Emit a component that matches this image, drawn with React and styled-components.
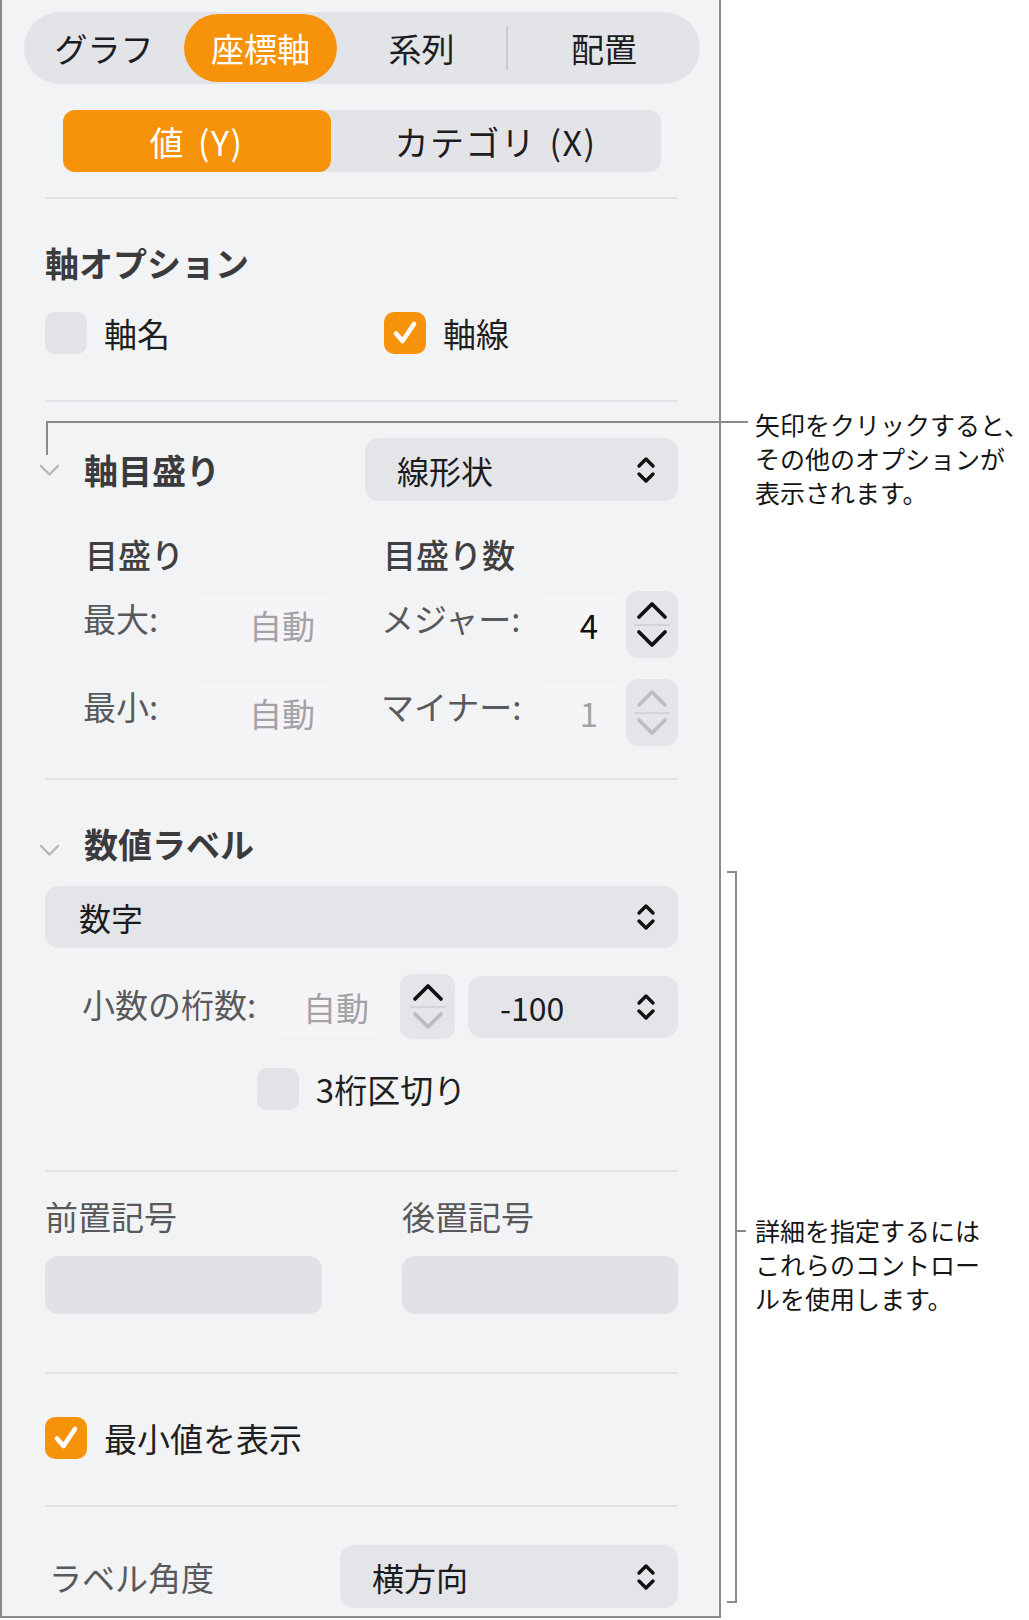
import React from "react";
import styled, { createGlobalStyle } from "styled-components";

const ORANGE = "#f7930b";
const CONTROL = "#e4e5e8";
const LINE = "#8a8a8a";

const Global = createGlobalStyle`
  html, body { margin: 0; padding: 0; background: #ffffff; }
  body {
    font-family: "Noto Sans CJK JP", "Noto Sans", sans-serif;
    -webkit-font-smoothing: antialiased;
  }
  * { box-sizing: border-box; }
`;

const Page = styled.div`
  position: relative;
  width: 1029px;
  height: 1620px;
  overflow: hidden;
`;

const Panel = styled.div`
  width: 721px;
  background: #f2f3f5;
  border-left: 2px solid ${LINE};
  border-right: 2px solid ${LINE};
  border-bottom: 2px solid ${LINE};
  padding: 12px 0 8px;
  display: flex;
  flex-direction: column;
`;

const TabBar = styled.div`
  margin: 0 19px 0 22px;
  height: 72px;
  border-radius: 36px;
  background: #e3e4e7;
  padding: 2px 0;
  display: flex;
  align-items: center;
`;

const Tab = styled.div`
  flex: none;
  width: ${(p) => p.$w}px;
  height: 100%;
  border-radius: 35px;
  display: flex;
  align-items: center;
  justify-content: center;
  font-size: 33px;
  color: ${(p) => (p.$active ? "#ffffff" : "#1d1d1f")};
  background: ${(p) => (p.$active ? ORANGE : "transparent")};
`;

const TabDivider = styled.div`
  flex: none;
  width: 2px;
  height: 43px;
  background: #cacacd;
`;

const Content = styled.div`
  padding: 0 41px 0 43px;
  display: flex;
  flex-direction: column;
`;

const Segment = styled.div`
  margin: 26px auto 0;
  width: 598px;
  height: 62px;
  border-radius: 12px;
  background: #e3e4e7;
  display: flex;
`;

const SegItem = styled.div`
  flex: none;
  width: ${(p) => p.$w}px;
  height: 100%;
  border-radius: 12px;
  display: flex;
  align-items: center;
  justify-content: center;
  font-size: 34px;
  letter-spacing: 1.5px;
  word-spacing: 4px;
  color: ${(p) => (p.$active ? "#ffffff" : "#1d1d1f")};
  background: ${(p) => (p.$active ? ORANGE : "transparent")};
`;

const Divider = styled.div`
  height: 2px;
  background: #e1e2e5;
  margin-top: ${(p) => p.$mt}px;
`;

const Heading = styled.div`
  margin-top: ${(p) => p.$mt}px;
  height: 40px;
  line-height: 40px;
  font-size: 34px;
  font-weight: 600;
  color: #3b3b3d;
  white-space: nowrap;
`;

const CheckRow = styled.div`
  margin-top: ${(p) => p.$mt}px;
  height: 42px;
  display: grid;
  grid-template-columns: ${(p) => p.$cols};
  justify-content: ${(p) => (p.$center ? "center" : "start")};
  align-items: center;
`;

const CheckItem = styled.label`
  display: flex;
  align-items: center;
  gap: 17px;
  font-size: 33px;
  color: #1f1f21;
  white-space: nowrap;
`;

const Box = styled.span`
  flex: none;
  width: 42px;
  height: 42px;
  border-radius: 10px;
  background: ${(p) => (p.$checked ? ORANGE : "#e2e3e6")};
  display: flex;
  align-items: center;
  justify-content: center;
`;

const DisclosureRow = styled.div`
  margin-top: ${(p) => p.$mt}px;
  height: ${(p) => p.$h}px;
  display: flex;
  align-items: center;
`;

const Disclosure = styled.span`
  flex: none;
  width: 21px;
  margin: ${(p) => p.$dy}px 24px 0 -6px;
  display: flex;
`;

const SectionTitle = styled.div`
  flex: 1;
  font-size: 34px;
  font-weight: 600;
  color: #3b3b3d;
  line-height: 40px;
  white-space: nowrap;
`;

const Popup = styled.div`
  flex: none;
  width: ${(p) => (p.$w ? `${p.$w}px` : "auto")};
  margin-top: ${(p) => p.$mt || 0}px;
  height: ${(p) => p.$h}px;
  border-radius: 14px;
  background: ${CONTROL};
  display: flex;
  align-items: center;
  justify-content: space-between;
  padding: 0 22px 0 ${(p) => p.$pl || 32}px;
  font-size: 32px;
  color: #1b1b1d;
  white-space: nowrap;
`;

const SubHeadRow = styled.div`
  margin: 33px 0 0 40px;
  height: 40px;
  display: grid;
  grid-template-columns: 298px 1fr;
  align-items: center;
`;

const SubHead = styled.div`
  font-size: 33px;
  font-weight: 500;
  color: #404042;
  line-height: 40px;
`;

const ValueRow = styled.div`
  margin: ${(p) => p.$mt}px 0 0 ${(p) => p.$ml}px;
  height: ${(p) => p.$h}px;
  display: flex;
  align-items: center;
`;

const RowLabel = styled.span`
  flex: none;
  width: ${(p) => p.$w}px;
  font-size: 33px;
  color: #59595c;
  white-space: nowrap;
  margin-top: ${(p) => p.$dy}px;
`;

const FaintField = styled.div`
  flex: none;
  width: ${(p) => p.$w}px;
  height: 60px;
  margin-right: ${(p) => p.$mr || 0}px;
  border-radius: 12px;
  background: rgba(255, 255, 255, 0.22);
  display: flex;
  align-items: center;
  justify-content: flex-end;
  padding-right: ${(p) => p.$pr}px;
  font-size: 33px;
  color: ${(p) => (p.$muted ? "#a3a3a7" : "#111113")};
  white-space: nowrap;
`;

const StepperBox = styled.div`
  flex: none;
  width: ${(p) => p.$w}px;
  height: ${(p) => p.$h}px;
  margin-right: ${(p) => p.$mr || 0}px;
  border-radius: 12px;
  background: ${CONTROL};
  display: flex;
  flex-direction: column;
  align-items: center;
  justify-content: space-between;
  padding: 6px 0;
`;

const StepHalf = styled.span`
  flex: 1;
  display: flex;
  align-items: center;
  justify-content: center;
`;

const StepSep = styled.span`
  width: 36px;
  height: 2px;
  background: #d3d4d7;
`;

const AffixGrid = styled.div`
  margin-top: 24px;
  display: grid;
  grid-template-columns: 277px 276px;
  column-gap: 80px;
  row-gap: 20px;
`;

const AffixLabel = styled.div`
  height: 40px;
  line-height: 40px;
  font-size: 33px;
  color: #59595c;
`;

const AffixField = styled.div`
  height: 58px;
  border-radius: 13px;
  background: #e1e2e5;
`;

const AngleRow = styled.div`
  margin-top: 38px;
  height: 63px;
  display: flex;
  align-items: center;
  justify-content: space-between;
  padding-left: 4px;
`;

/* ---------- callouts (overlay) ---------- */

const Leader = styled.div`
  position: absolute;
  left: 46px;
  top: 421px;
  width: 702px;
  height: 34px;
  border-top: 2px solid ${LINE};
  border-left: 2px solid ${LINE};
`;

const Bracket = styled.div`
  position: absolute;
  left: 727px;
  top: 871px;
  width: 10px;
  height: 732px;
  border: 2px solid ${LINE};
  border-left: none;
`;

const BracketTick = styled.div`
  position: absolute;
  left: 100%;
  top: 357px;
  width: 11px;
  height: 2px;
  background: ${LINE};
`;

const Note = styled.div`
  position: absolute;
  left: 755px;
  top: ${(p) => p.$top}px;
  width: 274px;
  font-size: 25px;
  line-height: 34px;
  color: #151515;
  white-space: nowrap;
`;

/* ---------- icons ---------- */

const Check = () => (
  <svg width="30" height="30" viewBox="0 0 30 30" fill="none">
    <path d="M6 15.5 L12.5 23 L24 6" stroke="#fff" strokeWidth="4.6" strokeLinecap="round" strokeLinejoin="round" />
  </svg>
);

const UpDown = () => (
  <svg width="20" height="28" viewBox="0 0 20 28" fill="none">
    <path d="M3 10 L10 3 L17 10" stroke="#111" strokeWidth="3.4" strokeLinecap="round" strokeLinejoin="round" />
    <path d="M3 18 L10 25 L17 18" stroke="#111" strokeWidth="3.4" strokeLinecap="round" strokeLinejoin="round" />
  </svg>
);

const Chevron = ({ up, color }) => (
  <svg width="32" height="19" viewBox="0 0 32 19" fill="none">
    <path
      d={up ? "M3 16 L16 3 L29 16" : "M3 3 L16 16 L29 3"}
      stroke={color}
      strokeWidth="3.8"
      strokeLinecap="round"
      strokeLinejoin="round"
    />
  </svg>
);

const DisclosureIcon = () => (
  <svg width="21" height="13" viewBox="0 0 21 13" fill="none">
    <path d="M2 2 L10.5 10.5 L19 2" stroke="#b6b6ba" strokeWidth="2.4" strokeLinecap="round" strokeLinejoin="round" />
  </svg>
);

const Stepper = ({ w = 52, h = 67, mr, upColor = "#111", downColor = "#111" }) => (
  <StepperBox $w={w} $h={h} $mr={mr}>
    <StepHalf>
      <Chevron up color={upColor} />
    </StepHalf>
    <StepSep />
    <StepHalf>
      <Chevron color={downColor} />
    </StepHalf>
  </StepperBox>
);

export default function App() {
  return (
    <>
      <Global />
      <Page>
        <Panel>
          <TabBar>
            <Tab $w={160}>グラフ</Tab>
            <Tab $w={153} $active>座標軸</Tab>
            <Tab $w={169}>系列</Tab>
            <TabDivider />
            <Tab $w={192}>配置</Tab>
          </TabBar>

          <Content>
            <Segment>
              <SegItem $w={268} $active>値 (Y)</SegItem>
              <SegItem $w={330}>カテゴリ (X)</SegItem>
            </Segment>

            <Divider $mt={25} />

            <Heading $mt={44}>軸オプション</Heading>
            <CheckRow $mt={26} $cols="339px 1fr">
              <CheckItem>
                <Box />
                軸名
              </CheckItem>
              <CheckItem>
                <Box $checked>
                  <Check />
                </Box>
                軸線
              </CheckItem>
            </CheckRow>

            <Divider $mt={49} />

            <DisclosureRow $mt={36} $h={63}>
              <Disclosure $dy={2}>
                <DisclosureIcon />
              </Disclosure>
              <SectionTitle>軸目盛り</SectionTitle>
              <Popup $w={313} $h={63}>
                線形状
                <UpDown />
              </Popup>
            </DisclosureRow>

            <SubHeadRow>
              <SubHead>目盛り</SubHead>
              <SubHead>目盛り数</SubHead>
            </SubHeadRow>

            <ValueRow $mt={17} $ml={38} $h={67}>
              <RowLabel $w={108} $dy={-14}>最大:</RowLabel>
              <FaintField $w={140} $pr={16} $mr={50} $muted>自動</FaintField>
              <RowLabel $w={159} $dy={-14}>メジャー:</RowLabel>
              <FaintField $w={80} $pr={22} $mr={6}>4</FaintField>
              <Stepper />
            </ValueRow>

            <ValueRow $mt={21} $ml={38} $h={67}>
              <RowLabel $w={108} $dy={-14}>最小:</RowLabel>
              <FaintField $w={140} $pr={16} $mr={50} $muted>自動</FaintField>
              <RowLabel $w={159} $dy={-14}>マイナー:</RowLabel>
              <FaintField $w={80} $pr={22} $mr={6} $muted>1</FaintField>
              <Stepper upColor="#bdbdc1" downColor="#bdbdc1" />
            </ValueRow>

            <Divider $mt={32} />

            <DisclosureRow $mt={44} $h={40}>
              <Disclosure $dy={12}>
                <DisclosureIcon />
              </Disclosure>
              <SectionTitle>数値ラベル</SectionTitle>
            </DisclosureRow>

            <Popup $mt={22} $h={62} $pl={34}>
              数字
              <UpDown />
            </Popup>

            <ValueRow $mt={26} $ml={37} $h={65}>
              <RowLabel $w={193} $dy={-6}>小数の桁数:</RowLabel>
              <FaintField $w={105} $pr={11} $mr={20} $muted>自動</FaintField>
              <Stepper w={55} h={65} mr={13} downColor="#bdbdc1" />
              <Popup $w={210} $h={62}>
                -100
                <UpDown />
              </Popup>
            </ValueRow>

            <CheckRow $mt={26} $cols="auto" $center>
              <CheckItem>
                <Box />
                3桁区切り
              </CheckItem>
            </CheckRow>

            <Divider $mt={63} />

            <AffixGrid>
              <AffixLabel>前置記号</AffixLabel>
              <AffixLabel>後置記号</AffixLabel>
              <AffixField />
              <AffixField />
            </AffixGrid>

            <Divider $mt={58} />

            <CheckRow $mt={40} $cols="auto">
              <CheckItem>
                <Box $checked>
                  <Check />
                </Box>
                最小値を表示
              </CheckItem>
            </CheckRow>

            <Divider $mt={49} />

            <AngleRow>
              <AffixLabel>ラベル角度</AffixLabel>
              <Popup $w={338} $h={63}>
                横方向
                <UpDown />
              </Popup>
            </AngleRow>
          </Content>
        </Panel>

        <Leader />
        <Note $top={407}>
          矢印をクリックすると、
          <br />
          その他のオプションが
          <br />
          表示されます。
        </Note>

        <Bracket>
          <BracketTick />
        </Bracket>
        <Note $top={1213}>
          詳細を指定するには
          <br />
          これらのコントロー
          <br />
          ルを使用します。
        </Note>
      </Page>
    </>
  );
}
